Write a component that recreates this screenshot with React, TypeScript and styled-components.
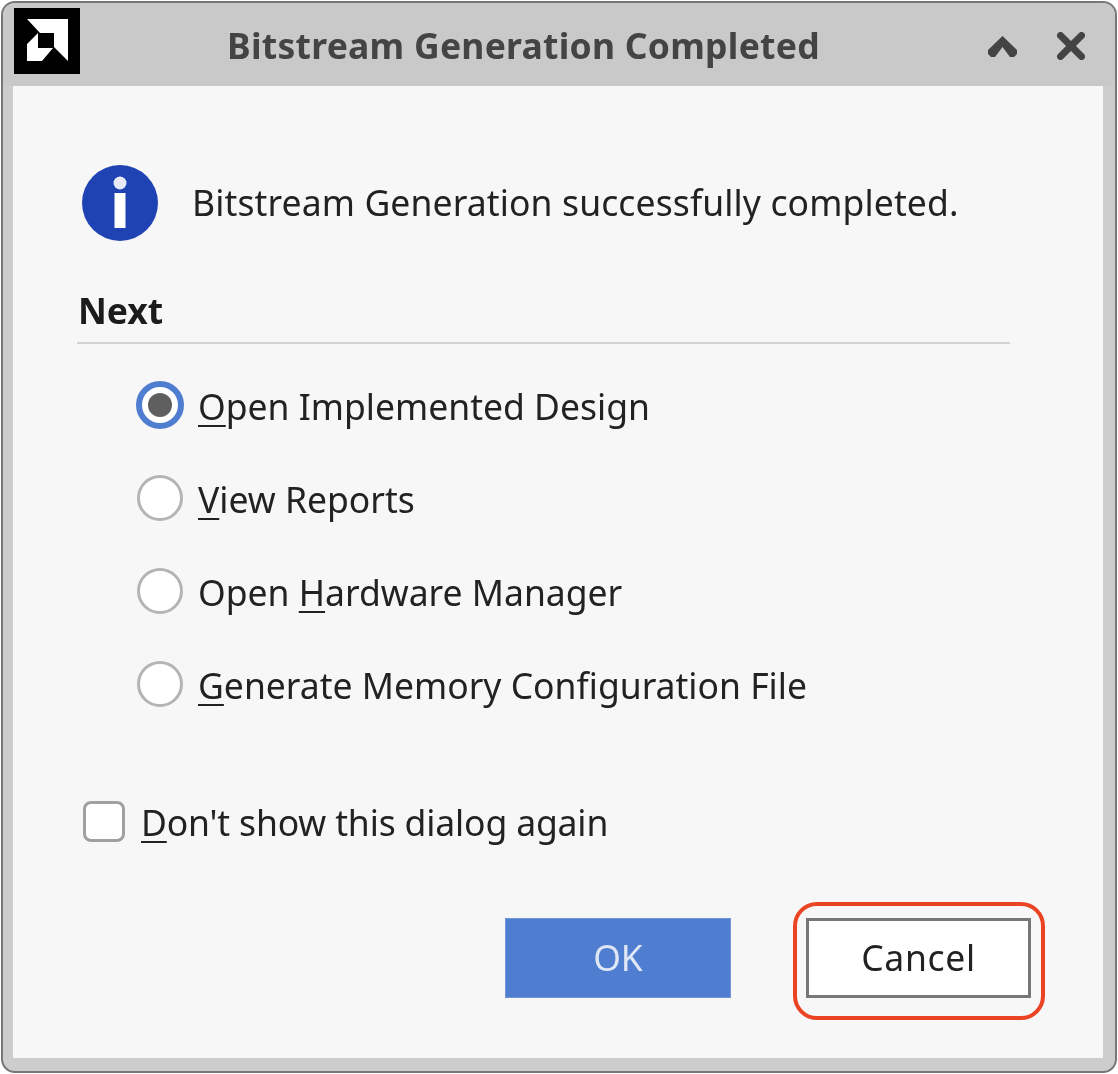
import React from 'react';
import styled, { createGlobalStyle } from 'styled-components';

const GlobalStyle = createGlobalStyle`
  html, body {
    margin: 0;
    padding: 0;
    background: #ffffff;
  }
  body {
    font-family: "Noto Sans", "Open Sans", sans-serif;
  }
`;

const Window = styled.div`
  box-sizing: border-box;
  display: flex;
  flex-direction: column;
  width: 1116px;
  height: 1072px;
  margin: 1px;
  border: 2px solid #77777a;
  border-radius: 14px;
  background: #cdcdcd;
  overflow: hidden;
  filter: blur(0.6px);
`;

const TitleBar = styled.div`
  display: grid;
  grid-template-columns: 80px 1fr 151px;
  align-items: center;
  height: 83px;
  flex: none;
  background: #c9c9c9;
`;

const LogoBox = styled.svg`
  display: block;
  width: 66px;
  height: 66px;
  margin: 0 0 7px 11px;
`;

const Title = styled.div`
  text-align: center;
  font-size: 35.5px;
  font-weight: 700;
  letter-spacing: 0.25px;
  color: #444444;
  white-space: nowrap;
`;

const WindowButtons = styled.div`
  display: flex;
  align-items: center;
  justify-content: flex-end;
  gap: 40px;
  padding: 3px 30px 0 0;
`;

const Content = styled.div`
  flex: 1;
  display: flex;
  flex-direction: column;
  margin: 0 12px 13px 10px;
  background: #f7f7f7;
  color: #222222;
  font-size: 35.5px;
`;

const Message = styled.div`
  display: flex;
  align-items: center;
  gap: 34px;
  margin: 79px 0 0 69px;
`;

const MessageText = styled.span`
  padding-bottom: 2px;
  letter-spacing: 0.12px;
`;

const InfoIcon = styled.svg`
  display: block;
  width: 76px;
  height: 76px;
`;

const Section = styled.div`
  margin: 46px 93px 0 64px;
  padding: 0 0 9px 1px;
  border-bottom: 2px solid #d3d3d3;
  font-weight: 700;
  color: #1c1c1c;
  line-height: 46px;
`;

const Options = styled.div`
  display: flex;
  flex-direction: column;
  margin: 14px 0 0 124px;
`;

const OptionRow = styled.div`
  display: flex;
  align-items: center;
  gap: 15px;
  height: 93px;
`;

const Radio = styled.div<{ $checked?: boolean }>`
  box-sizing: border-box;
  display: flex;
  align-items: center;
  justify-content: center;
  width: ${({ $checked }) => ($checked ? '48px' : '46px')};
  height: ${({ $checked }) => ($checked ? '48px' : '46px')};
  margin: ${({ $checked }) => ($checked ? '0 -1px' : '0')};
  flex: none;
  border-radius: 50%;
  background: #ffffff;
  border: ${({ $checked }) =>
    $checked ? '6px solid #4f7dd0' : '3px solid #b4b4b4'};
`;

const RadioDot = styled.div`
  width: 24px;
  height: 24px;
  border-radius: 50%;
  background: #5f5f5f;
`;

const OptionLabel = styled.span`
  padding-top: 2px;
`;

const Key = styled.span`
  text-decoration: underline;
  text-decoration-thickness: 2px;
  text-underline-offset: 5px;
`;

const CheckRow = styled.div`
  display: flex;
  align-items: center;
  gap: 16px;
  margin: 71px 0 0 70px;
  height: 41px;
`;

const CheckLabel = styled.span`
  letter-spacing: -0.15px;
`;

const CheckBox = styled.div`
  box-sizing: border-box;
  width: 42px;
  height: 41px;
  flex: none;
  border: 3px solid #a0a0a0;
  border-radius: 8px;
  background: #ffffff;
`;

const Footer = styled.div`
  display: flex;
  justify-content: flex-end;
  gap: 75px;
  margin: 76px 72px 0 0;
`;

const Button = styled.div<{ $primary?: boolean }>`
  box-sizing: border-box;
  display: flex;
  align-items: center;
  justify-content: center;
  width: ${({ $primary }) => ($primary ? '226px' : '225px')};
  height: 80px;
  padding-bottom: 2px;
  font-size: 35.5px;
  letter-spacing: ${({ $primary }) => ($primary ? '0' : '0.7px')};
  background: ${({ $primary }) => ($primary ? '#4f7dd0' : '#ffffff')};
  color: ${({ $primary }) => ($primary ? '#dfe7f6' : '#222222')};
  border: ${({ $primary }) =>
    $primary ? '1px solid #7096d9' : '3px solid #777777'};
`;

const CancelWrap = styled.div`
  position: relative;
`;

const Highlight = styled.div`
  position: absolute;
  top: -16px;
  left: -13px;
  width: 252px;
  height: 118px;
  box-sizing: border-box;
  border: 4px solid #ea4425;
  border-radius: 24px;
`;

const options: { key: string; before: string; after: string; checked?: boolean }[] = [
  { before: '', key: 'O', after: 'pen Implemented Design', checked: true },
  { before: '', key: 'V', after: 'iew Reports' },
  { before: 'Open ', key: 'H', after: 'ardware Manager' },
  { before: '', key: 'G', after: 'enerate Memory Configuration File' },
];

const App: React.FC = () => (
  <>
    <GlobalStyle />
    <Window>
      <TitleBar>
        <LogoBox viewBox="0 0 66 66">
          <rect width="66" height="66" fill="#000000" />
          <path d="M13 11H54V53L40 39V25H26Z" fill="#ffffff" />
          <path d="M13 36L24 25V40H39L28 53H13Z" fill="#ffffff" />
        </LogoBox>
        <Title>Bitstream Generation Completed</Title>
        <WindowButtons>
          <svg width="29" height="21" viewBox="0 0 29 21">
            <path d="M14.5 0L29 14V18L26 21H22L14.5 11L7 21H3L0 18V14Z" fill="#444444" />
          </svg>
          <svg width="28" height="28" viewBox="0 0 28 28">
            <path
              d="M3.5 3.5L24.5 24.5M24.5 3.5L3.5 24.5"
              fill="none"
              stroke="#444444"
              strokeWidth="7"
              strokeLinecap="round"
            />
          </svg>
        </WindowButtons>
      </TitleBar>
      <Content>
        <Message>
          <InfoIcon viewBox="0 0 76 76">
            <circle cx="38" cy="38" r="38" fill="#1f43b2" />
            <circle cx="38" cy="18" r="6.5" fill="#e8ecf8" />
            <rect x="32.5" y="28" width="11" height="35" fill="#ffffff" />
          </InfoIcon>
          <MessageText>Bitstream Generation successfully completed.</MessageText>
        </Message>
        <Section>Next</Section>
        <Options>
          {options.map((o) => (
            <OptionRow key={o.key}>
              <Radio $checked={o.checked}>{o.checked && <RadioDot />}</Radio>
              <OptionLabel>
                {o.before}
                <Key>{o.key}</Key>
                {o.after}
              </OptionLabel>
            </OptionRow>
          ))}
        </Options>
        <CheckRow>
          <CheckBox />
          <CheckLabel>
            <Key>D</Key>on't show this dialog again
          </CheckLabel>
        </CheckRow>
        <Footer>
          <Button $primary>OK</Button>
          <CancelWrap>
            <Button>Cancel</Button>
            <Highlight />
          </CancelWrap>
        </Footer>
      </Content>
    </Window>
  </>
);

export default App;
